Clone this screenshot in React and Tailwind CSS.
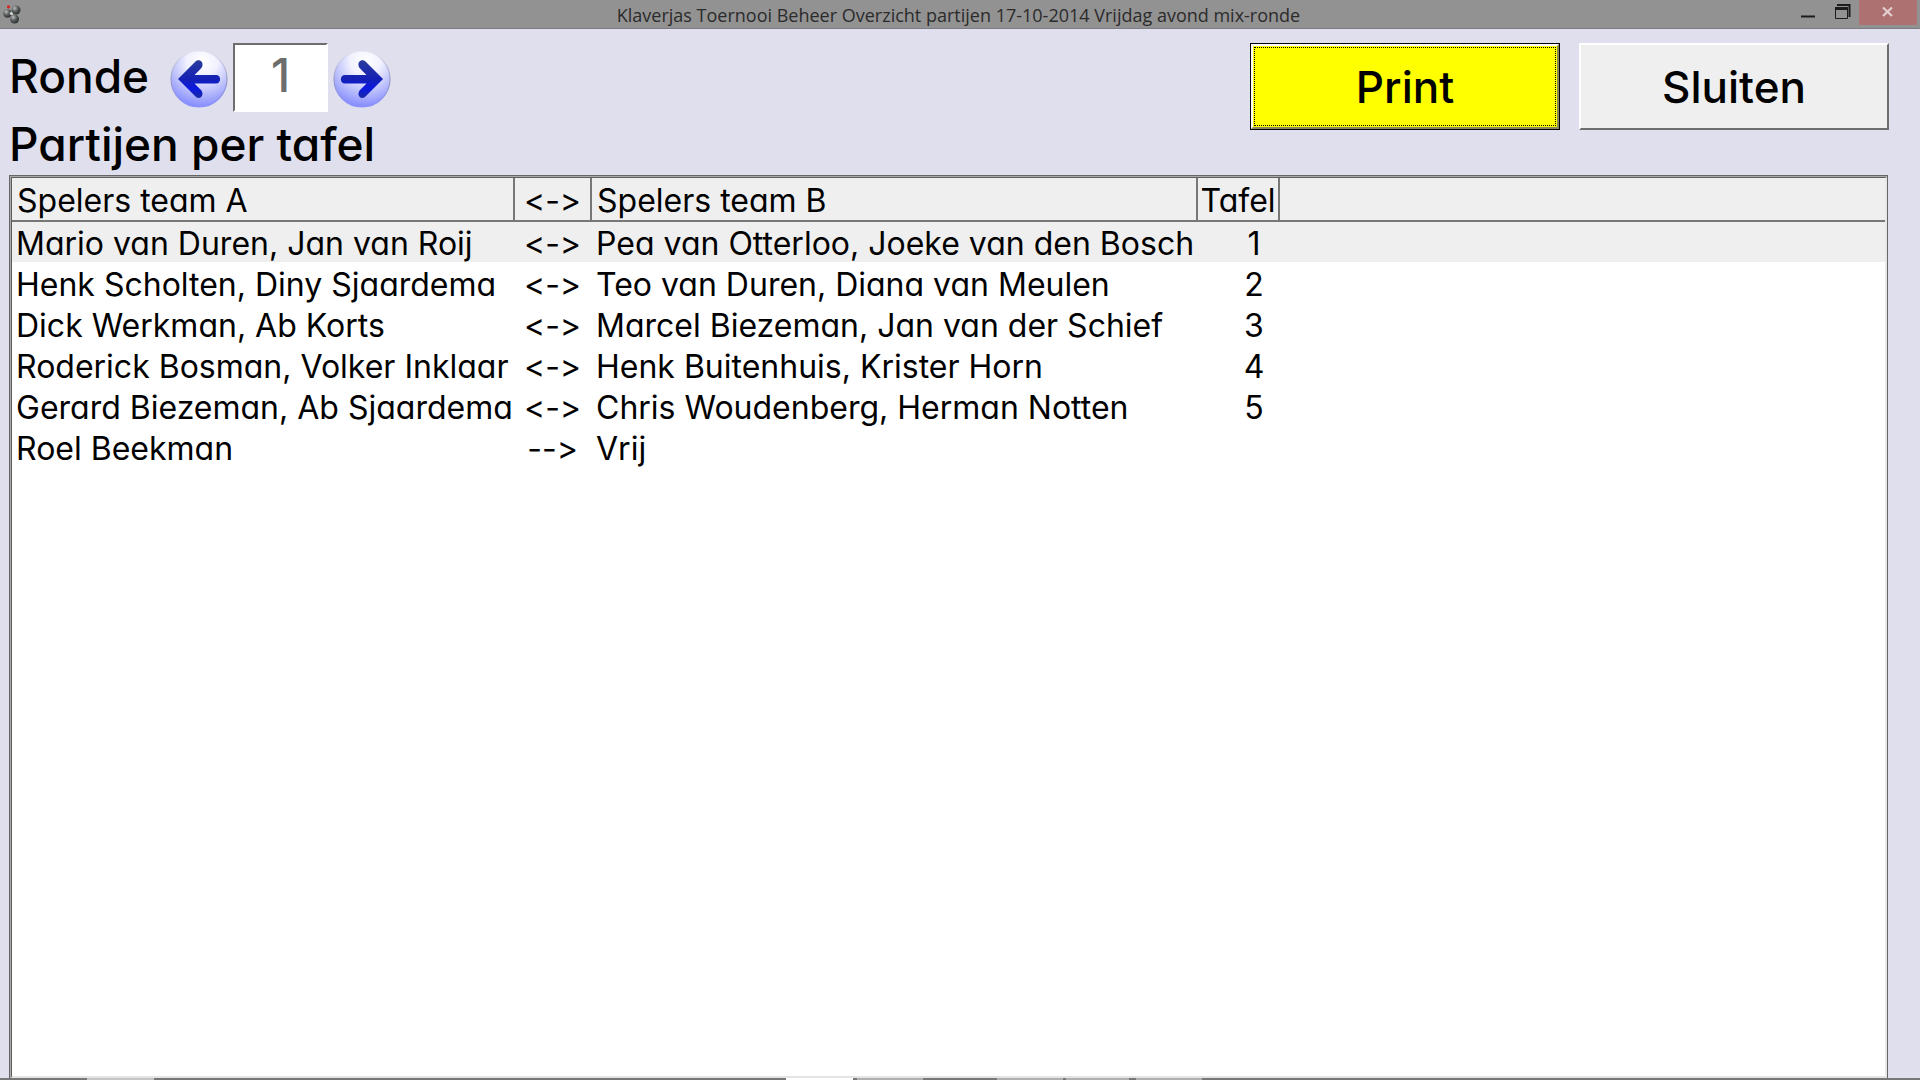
import { useState } from "react";

const games = [
  { teamA: "Mario van Duren, Jan van Roij", sign: "<->", teamB: "Pea van Otterloo, Joeke van den Bosch", table: 1 },
  { teamA: "Henk Scholten, Diny Sjaardema", sign: "<->", teamB: "Teo van Duren, Diana van Meulen", table: 2 },
  { teamA: "Dick Werkman, Ab Korts", sign: "<->", teamB: "Marcel Biezeman, Jan van der Schief", table: 3 },
  { teamA: "Roderick Bosman, Volker Inklaar", sign: "<->", teamB: "Henk Buitenhuis, Krister Horn", table: 4 },
  { teamA: "Gerard Biezeman, Ab Sjaardema", sign: "<->", teamB: "Chris Woudenberg, Herman Notten", table: 5 },
  { teamA: "Roel Beekman", sign: "-->", teamB: "Vrij", table: "" },
];

function AppIcon() {
  return (
    <svg className="ml-[3px] h-5 w-[19px]" viewBox="0 0 19 20" aria-hidden="true">
      <defs>
        <radialGradient id="ball" cx="0.35" cy="0.3" r="0.7">
          <stop offset="0" stopColor="#b9bdbd" />
          <stop offset="0.5" stopColor="#5d6161" />
          <stop offset="1" stopColor="#2e3131" />
        </radialGradient>
      </defs>
      <circle cx="13" cy="6" r="4.5" fill="url(#ball)" />
      <circle cx="4.5" cy="9.5" r="4.3" fill="url(#ball)" />
      <circle cx="11.5" cy="15" r="4.5" fill="url(#ball)" />
      <circle cx="8.3" cy="9.5" r="1.5" fill="#d5d8d8" />
      <circle cx="5.5" cy="2.8" r="1.6" fill="#d8231c" />
    </svg>
  );
}

function RoundButton({ label, flipped, onClick }) {
  return (
    <button type="button" aria-label={label} onClick={onClick} className="mt-0.5 h-[58px] w-[58px] shrink-0">
      <svg viewBox="0 0 58 58" className="h-full w-full">
        <defs>
          <radialGradient id={label + "-glass"} cx="0.56" cy="0.18" r="0.85">
            <stop offset="0" stopColor="#ffffff" />
            <stop offset="0.32" stopColor="#f1f1ff" />
            <stop offset="0.65" stopColor="#bcc0fb" />
            <stop offset="1" stopColor="#7f86ff" />
          </radialGradient>
          <linearGradient id={label + "-rim"} x1="0" y1="0" x2="0" y2="1">
            <stop offset="0" stopColor="#e6e6f4" />
            <stop offset="0.5" stopColor="#9a9cc8" />
            <stop offset="1" stopColor="#8890ff" />
          </linearGradient>
          <linearGradient id={label + "-ink"} gradientUnits="userSpaceOnUse" x1="0" y1="10" x2="0" y2="48">
            <stop offset="0" stopColor="#2a3c9c" />
            <stop offset="0.5" stopColor="#1420b4" />
            <stop offset="0.75" stopColor="#0b18e0" />
            <stop offset="1" stopColor="#1a2ba0" />
          </linearGradient>
        </defs>
        <circle cx="29" cy="29" r="28" fill={`url(#${label}-glass)`} stroke={`url(#${label}-rim)`} strokeWidth="1.2" />
        <g transform={flipped ? "translate(58 0) scale(-1 1)" : undefined} fill={`url(#${label}-ink)`}>
          <path d="M8 29 L25 12 C28 8.500 33 11 32.500 15 C32.500 17 31 18.500 29.500 20 L24.500 25 H46 C51.500 25 51.500 33.500 46 33.500 H24.500 L30.500 39.500 C34 43 32.500 47.500 29 48 C27 48 26 47 25 46 Z" />
        </g>
      </svg>
    </button>
  );
}

function TitleBar() {
  return (
    <header className="flex h-[29px] shrink-0 items-start border-b border-[#7d7b86] bg-[#929292]">
      <div className="flex flex-1 pt-1">
        <AppIcon />
      </div>
      <h1 className="font-['Open_Sans','Noto_Sans',sans-serif] text-[18px] font-normal leading-[30px] text-[#2b2b2b]">
        Klaverjas Toernooi Beheer Overzicht partijen 17-10-2014 Vrijdag avond mix-ronde
      </h1>
      <div className="flex flex-1 justify-end pr-[3px]">
        <button type="button" aria-label="Minimaliseren" className="h-[25px] w-[34px]">
          <svg viewBox="0 0 34 25" className="h-full w-full">
            <path d="M10 16.500 H24" stroke="#1c1c1c" strokeWidth="2" />
          </svg>
        </button>
        <button type="button" aria-label="Herstellen" className="h-[25px] w-[34px]">
          <svg viewBox="0 0 34 25" className="h-full w-full" fill="none" stroke="#1c1c1c">
            <path d="M12 5 H24.500 V17" strokeWidth="2" />
            <path d="M10.500 18.500 V8.500 H22.500 V18.500 Z" />
            <path d="M10 8.500 H23" strokeWidth="3" />
          </svg>
        </button>
        <button type="button" aria-label="Venster sluiten" className="h-[25px] w-[58px] bg-[#ae7172]">
          <svg viewBox="0 0 58 25" className="h-full w-full">
            <path d="M24 7.500 L33 16 M33 7.500 L24 16" stroke="#e3d0d0" strokeWidth="2.200" />
          </svg>
        </button>
      </div>
    </header>
  );
}

export default function App() {
  const [round, setRound] = useState(1);

  return (
    <div className="flex h-screen flex-col bg-[#e0dfee] font-['Inter',sans-serif] font-medium text-black [font-feature-settings:'cv11','calt'_0]">
      <TitleBar />

      <main className="flex min-h-0 flex-1 flex-col pl-[9px] pr-8 pt-[14px]">
        <div className="-mr-px flex items-start justify-between">
          <div className="flex items-center">
            <label htmlFor="round" className="w-[161px] pb-1 text-[46px] leading-[64px]">
              Ronde
            </label>
            <RoundButton label="Vorige" onClick={() => setRound(Math.max(1, round - 1))} />
            <input
              id="round"
              type="text"
              readOnly
              value={round}
              className="mx-[5px] h-[69px] w-[95px] border-2 border-b-white border-l-[#6e6e6e] border-r-white border-t-[#6e6e6e] bg-white pb-1 text-center text-[46px] text-[#6d6d6d] outline-none"
            />
            <RoundButton label="Volgende" flipped onClick={() => setRound(round + 1)} />
          </div>

          <div className="flex gap-[19px] text-[44px]">
            <button type="button" className="h-[87px] w-[310px] border border-black bg-[#6e6e6e]">
              <span className="flex h-full border-2 border-b-[#8a8a5a] border-l-white border-r-[#8a8a5a] border-t-white bg-[#ffff00] p-px">
                <span className="flex flex-1 items-center justify-center border border-dotted border-black">Print</span>
              </span>
            </button>
            <button
              type="button"
              className="h-[87px] w-[310px] border-2 border-b-[#6e6e6e] border-l-white border-r-[#6e6e6e] border-t-white bg-[#efefef]"
            >
              Sluiten
            </button>
          </div>
        </div>

        <h2 className="-mt-[15px] pb-0.5 text-[46px] leading-[58px]">Partijen per tafel</h2>

        <div className="flex min-h-0 flex-1 flex-col border-x border-t border-[#666666] bg-[#a9a9a9] pl-px pt-px">
          <div className="min-h-0 flex-1 overflow-hidden border-b-2 border-l border-r-2 border-t border-b-[#e4e4e4] border-l-[#5f5f5f] border-r-[#e8e8e8] border-t-[#5f5f5f] bg-white">
            <table className="w-full table-fixed border-collapse whitespace-nowrap text-left text-[32px] font-normal leading-9">
              <colgroup>
                <col className="w-[502px]" />
                <col className="w-[77px]" />
                <col className="w-[606px]" />
                <col className="w-[82px]" />
                <col />
              </colgroup>
              <thead className="bg-[#efefef]">
                <tr className="h-[43px] border-b-2 border-[#777777]">
                  <th className="border-r-2 border-[#777777] pl-[5px] pt-1 font-normal">Spelers team A</th>
                  <th className="border-r-2 border-[#777777] pt-1 text-center font-normal">{"<->"}</th>
                  <th className="border-r-2 border-[#777777] pl-[5px] pt-1 font-normal">Spelers team B</th>
                  <th className="border-r-2 border-[#777777] pt-1 text-center font-normal">Tafel</th>
                  <td></td>
                </tr>
              </thead>
              <tbody>
                {games.map((game) => (
                  <tr key={game.teamA} className="h-[41px] first:bg-[#efefef]">
                    <td className="pl-1 pt-1">{game.teamA}</td>
                    <td className="pt-1 text-center">{game.sign}</td>
                    <td className="pl-[5px] pt-1">{game.teamB}</td>
                    <td className="pl-8 pt-1 text-center">{game.table}</td>
                    <td></td>
                  </tr>
                ))}
              </tbody>
            </table>
          </div>
        </div>
      </main>

      {/* top edge of the taskbar */}
      <footer className="flex h-[2px] shrink-0 bg-[#777777]">
        <div className="ml-[87px] w-[67px] bg-[#c4c4c4]" />
        <div className="ml-[632px] w-[67px] bg-white" />
        <div className="ml-1 w-[66px] bg-[#b0b0b0]" />
        <div className="ml-[74px] w-[66px] bg-[#b0b0b0]" />
        <div className="ml-[3px] w-[63px] bg-[#b0b0b0]" />
        <div className="ml-[7px] w-[66px] bg-[#b0b0b0]" />
      </footer>
    </div>
  );
}
